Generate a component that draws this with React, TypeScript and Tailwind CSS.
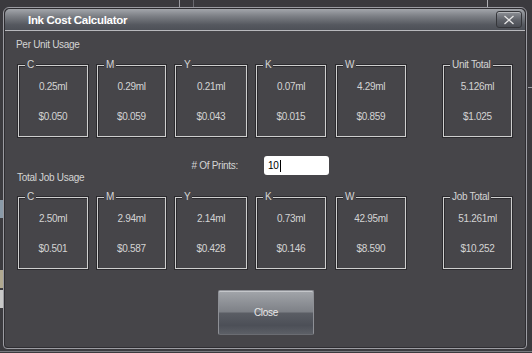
import React from "react";

const font = { fontFamily: '"Liberation Sans", Arial, sans-serif' };

type Box = { label: string; ml: string; w: string; amt: string; cost: string };

const row1: Box[] = [
  { label: "C", ml: "ml-[13px]", w: "w-[70px]", amt: "0.25ml", cost: "$0.050" },
  { label: "M", ml: "ml-[9px]", w: "w-[69px]", amt: "0.29ml", cost: "$0.059" },
  { label: "Y", ml: "ml-[9px]", w: "w-[72px]", amt: "0.21ml", cost: "$0.043" },
  { label: "K", ml: "ml-[9px]", w: "w-[70px]", amt: "0.07ml", cost: "$0.015" },
  { label: "W", ml: "ml-[10px]", w: "w-[70px]", amt: "4.29ml", cost: "$0.859" },
  { label: "Unit Total", ml: "ml-[37px]", w: "w-[69px]", amt: "5.126ml", cost: "$1.025" },
];

const row2: Box[] = [
  { label: "C", ml: "ml-[13px]", w: "w-[70px]", amt: "2.50ml", cost: "$0.501" },
  { label: "M", ml: "ml-[9px]", w: "w-[69px]", amt: "2.94ml", cost: "$0.587" },
  { label: "Y", ml: "ml-[9px]", w: "w-[72px]", amt: "2.14ml", cost: "$0.428" },
  { label: "K", ml: "ml-[9px]", w: "w-[70px]", amt: "0.73ml", cost: "$0.146" },
  { label: "W", ml: "ml-[10px]", w: "w-[70px]", amt: "42.95ml", cost: "$8.590" },
  { label: "Job Total", ml: "ml-[37px]", w: "w-[69px]", amt: "51.261ml", cost: "$10.252" },
];

function Group({ b }: { b: Box }) {
  return (
    <div
      className={`${b.ml} ${b.w} relative h-[72px] border border-[#cfcfcf] shadow-[0_0_0_1px_#2b2a2e,inset_1px_1px_0_#2b2a2e] flex flex-col items-center text-[10px] tracking-[-0.3px] text-[#d4d4d4]`}
    >
      <div className="absolute -top-[8px] left-[6px] bg-[#464549] px-[2px] leading-[14px] text-[10px] tracking-[-0.3px] text-[#d4d4d4]">
        {b.label}
      </div>
      <div className="mt-[14px] leading-[14px]">{b.amt}</div>
      <div className="mt-[16px] leading-[14px]">{b.cost}</div>
    </div>
  );
}

export default function App() {
  return (
    <div className="relative w-[532px] h-[353px] overflow-hidden bg-[#3b3a3e]" style={font}>
      {/* backdrop details */}
      <div className="absolute left-[179px] top-0 h-[7px] w-px bg-[#9a9aa0]" />
      <div className="absolute left-[193px] top-0 h-[7px] w-px bg-[#6a6a70]" />
      <div className="absolute left-[487px] top-0 h-[7px] w-px bg-[#b0b0b4]" />
      <div className="absolute left-0 top-[200px] h-[18px] w-[3px] bg-[#8a9aa8]" />
      <div className="absolute left-0 top-[270px] h-[18px] w-[3px] bg-[#b0a890]" />
      <div className="absolute left-0 top-[290px] h-[18px] w-[3px] bg-[#c8c8c8]" />
      <div className="absolute left-[528px] top-[87px] h-px w-[4px] bg-[#9a9aa0]" />
      <div className="absolute left-0 top-[351px] h-px w-[532px] bg-[#7a7a80]" />

      <div className="ml-[3px] mt-[7px] w-[524px] h-[342px] rounded-t-[6px] rounded-b-[4px] border border-[#9c9ca2] bg-[#2e2d31] p-px">
        <div className="flex h-full flex-col rounded-t-[5px] rounded-b-[3px] overflow-hidden bg-[#464549]">
          {/* title bar */}
          <div className="relative flex h-[22px] shrink-0 items-center bg-[linear-gradient(#a3a6ab,#7b7e84_35%,#55585f_75%,#4d5057)] border-b border-[#b8b8bc]">
            <div className="ml-[23px] mt-[2px] text-[11.5px] tracking-[-0.3px] font-bold text-white leading-none">Ink Cost Calculator</div>
            <div className="absolute right-[3px] top-[2px] flex h-[17px] w-[26px] items-center justify-center rounded-[3px] border border-[#35363a] bg-[linear-gradient(#8e9197,#5e6168_55%,#4a4d54)] shadow-[inset_0_1px_0_#b4b6ba]">
              <svg width="12" height="10" viewBox="0 0 12 10">
                <path d="M1.5 1 L10.5 9 M10.5 1 L1.5 9" stroke="#e6e6e6" strokeWidth="1.3" />
              </svg>
            </div>
          </div>

          {/* body */}
          <div className="flex flex-col pt-[7px] text-[#d4d4d4] text-[10px] tracking-[-0.3px]">
            <div className="ml-[11px] leading-[14px]">Per Unit Usage</div>
            <div className="mt-[13px] flex">
              {row1.map((b) => (
                <Group key={b.label} b={b} />
              ))}
            </div>

            <div className="mt-[19px] flex items-center">
              <div className="ml-[176px] w-[57px] text-right leading-[14px]">
                # Of Prints:
              </div>
              <div className="ml-[26px] flex h-[19px] w-[65px] items-center rounded-[3px] bg-white pl-[4px] text-black">
                10<span className="ml-px inline-block h-[12px] w-px bg-black" />
              </div>
            </div>

            <div className="-mt-[4px] ml-[12px] leading-[14px]">Total Job Usage</div>

            <div className="mt-[12px] flex">
              {row2.map((b) => (
                <Group key={b.label + "2"} b={b} />
              ))}
            </div>

            <div className="mt-[21px] ml-[213px] flex h-[45px] w-[96px] items-center justify-center rounded-[2px] border border-[#8e9096] border-b-[#6a6c72] bg-[linear-gradient(#a2a5aa,#7e8187_48%,#5a5d64_52%,#4c4f57_80%,#5c5f66)] shadow-[inset_0_1px_0_#c4c6ca] text-[#e8e8e8]">
              Close
            </div>
          </div>
        </div>
      </div>
    </div>
  );
}
